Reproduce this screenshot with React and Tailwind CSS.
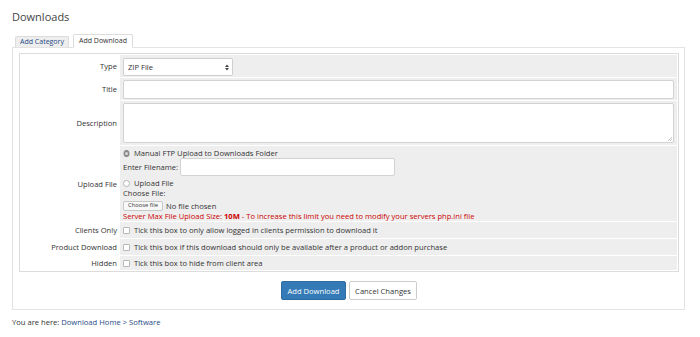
import React from 'react';

// Small form controls drawn to match the admin screenshot
function Radio({ checked }) {
  return (
    <span className="inline-flex items-center justify-center w-[7px] h-[7px] rounded-full border border-[#b5b5b5] bg-white shrink-0">
      {checked && <span className="w-[7px] h-[7px] rounded-full bg-[#8a8a8a] flex items-center justify-center"><span className="w-[3px] h-[3px] rounded-full bg-[#d8d8d8]" /></span>}
    </span>
  );
}

function Checkbox() {
  return <span className="inline-block w-[7px] h-[7px] rounded-[1px] border border-[#b8b8b8] bg-white shrink-0" />;
}

function Row({ label, height, children, className = '' }) {
  return (
    <div className={`flex gap-px ${height}`}>
      <div className="w-[98px] flex items-center justify-end pr-[2px] text-[#333]">{label}</div>
      <div className={`flex-1 bg-[#eeeeee] px-[3px] ${className}`}>{children}</div>
    </div>
  );
}

export default function App() {
  return (
    <div className="w-[700px] h-[337px] overflow-hidden bg-white px-[12px] font-['Open_Sans',sans-serif] text-[7.6px] leading-[10px] text-[#333]">
      {/* Header */}
      <h1 className="pt-[9px] text-[11px] leading-[16px] font-normal text-[#444]">Downloads</h1>

      {/* Tabs */}
      <div className="flex items-end gap-[4px] pl-[3px] mt-[9px] relative z-10 -mb-px">
        <div className="h-[12px] w-[54px] flex items-center justify-center bg-[#eeeeee] border border-[#dcdcdc] border-b-[#e3e3e3] rounded-t-[2px] text-[7px] text-[#1f4b86]">
          Add Category
        </div>
        <div className="h-[14px] w-[60px] flex items-center justify-center bg-white border border-[#dcdcdc] border-b-white rounded-t-[2px] text-[7px] text-[#333]">
          Add Download
        </div>
      </div>

      {/* Panel */}
      <div className="w-[673px] border border-[#e3e3e3] pt-[5px] pl-[6px] pr-[5px] pb-[9px]">
        <div className="w-[660px] border border-[#dcdcdc] p-px flex flex-col gap-px">
          <Row label="Type" height="h-[22px]" className="pt-[3px]">
            <div className="w-[110px] h-[18px] bg-white border border-[#cfcfcf] rounded-[2px] flex items-center justify-between pl-[4px] pr-[3px]">
              <span>ZIP File</span>
              <svg width="4" height="7" viewBox="0 0 4 7"><path d="M0 3 L2 0.5 L4 3 Z M0 4 L2 6.5 L4 4 Z" fill="#444" /></svg>
            </div>
          </Row>

          <Row label="Title" height="h-[22px]" className="pt-[2px]">
            <div className="h-[19px] bg-white border border-[#d2d2d2] rounded-[2px]" />
          </Row>

          <Row label="Description" height="h-[44px]" className="pt-[2px]">
            <div className="relative h-[40px] bg-white border border-[#d2d2d2] rounded-[2px]">
              <svg className="absolute right-[1px] bottom-[1px]" width="5" height="5" viewBox="0 0 5 5">
                <path d="M1 5 L5 1 M3 5 L5 3" stroke="#aaa" strokeWidth="0.7" />
              </svg>
            </div>
          </Row>

          <Row label="Upload File" height="h-[75px]" className="pt-[2px] pb-px">
            <div className="flex items-center gap-[4px] h-[10px]">
              <Radio checked />
              <span>Manual FTP Upload to Downloads Folder</span>
            </div>
            <div className="flex items-center gap-[2px] h-[18px]">
              <span>Enter Filename:</span>
              <div className="w-[215px] h-[18px] bg-white border border-[#d2d2d2] rounded-[2px]" />
            </div>
            <div className="flex items-center gap-[4px] h-[10px] mt-[2px]">
              <Radio />
              <span>Upload File</span>
            </div>
            <div className="h-[10px] flex items-center">Choose File:</div>
            <div className="flex items-center gap-[3px] h-[11px] mt-[2px]">
              <span className="h-[10px] w-[40px] flex items-center justify-center bg-[#f8f8f8] border border-[#c8c8c8] rounded-[2px] text-[5.8px] leading-none">
                Choose file
              </span>
              <span>No file chosen</span>
            </div>
            <div className="h-[10px] flex items-center text-[#cc0000]">
              Server Max File Upload Size:&nbsp;<b className="font-bold">10M</b>&nbsp;- To increase this limit you need to modify your servers php.ini file
            </div>
          </Row>

          <Row label="Clients Only" height="h-[16px]" className="flex items-center gap-[4px]">
            <Checkbox />
            <span>Tick this box to only allow logged in clients permission to download it</span>
          </Row>

          <Row label="Product Download" height="h-[16px]" className="flex items-center gap-[4px]">
            <Checkbox />
            <span>Tick this box if this download should only be available after a product or addon purchase</span>
          </Row>

          <Row label="Hidden" height="h-[14px]" className="flex items-center gap-[4px]">
            <Checkbox />
            <span>Tick this box to hide from client area</span>
          </Row>
        </div>

        {/* Actions */}
        <div className="flex justify-center gap-[3px] mt-[9px]">
          <button className="h-[19px] w-[65px] bg-[#337ab7] border border-[#2e6da4] rounded-[2px] text-white text-[7.6px]">
            Add Download
          </button>
          <button className="h-[19px] w-[68px] bg-white border border-[#cccccc] rounded-[2px] text-[#333] text-[7.6px]">
            Cancel Changes
          </button>
        </div>
      </div>

      {/* Breadcrumb */}
      <p className="mt-[7px] leading-[11px]">
        You are here: <a className="text-[#1f4b86]">Download Home</a> <span className="text-[#1f4b86]">&gt;</span> <a className="text-[#1f4b86]">Software</a>
      </p>
    </div>
  );
}
